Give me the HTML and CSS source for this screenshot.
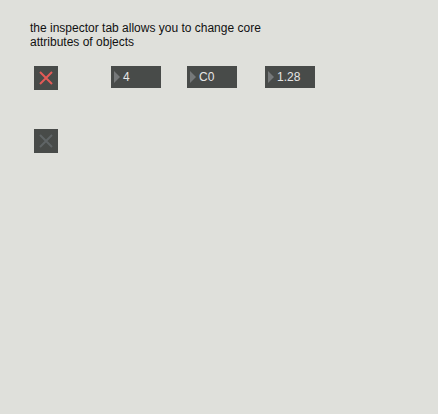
FILE: index.html
```html
<!DOCTYPE html>
<html>
<head>
<meta charset="utf-8">
<link rel="stylesheet" href="styles.css">
</head>
<body>
<div class="patch">
  <p class="comment">the inspector tab allows you to change core<br>attributes of objects</p>
  <div class="row">
    <div class="toggle on">
      <svg width="14" height="14" viewBox="0 0 14 14"><path d="M1 1 L13 13 M13 1 L1 13" stroke="#e35a57" stroke-width="2" stroke-linecap="butt"/></svg>
    </div>
    <div class="numbox first"><span class="tri"></span><span class="val">4</span></div>
    <div class="numbox second"><span class="tri"></span><span class="val">C0</span></div>
    <div class="numbox third"><span class="tri"></span><span class="val">1.28</span></div>
  </div>
  <div class="toggle off">
    <svg width="14" height="14" viewBox="0 0 14 14"><path d="M1 1 L13 13 M13 1 L1 13" stroke="#5f6466" stroke-width="2"/></svg>
  </div>
</div>
</body>
</html>
```
FILE: styles.css
```css
html, body {
  margin: 0;
  padding: 0;
  background: #dfe0db;
  width: 438px;
  height: 414px;
  overflow: hidden;
}
.patch {
  padding: 21px 0 0 30px;
  font-family: "Liberation Sans", Arial, sans-serif;
}
.comment {
  margin: 0;
  font-size: 12px;
  line-height: 14px;
  color: #111;
}
.row {
  display: flex;
  align-items: flex-start;
  margin-top: 17px;
  margin-left: 4px;
}
.toggle {
  width: 24px;
  height: 24px;
  background: #484b49;
  display: flex;
  align-items: center;
  justify-content: center;
}
.toggle.off {
  margin-top: 39px;
  margin-left: 4px;
}
.numbox {
  width: 50px;
  height: 22px;
  background: #484b49;
  display: flex;
  align-items: center;
  color: #e6e6e6;
  font-size: 12px;
}
.numbox.first {
  margin-left: 53px;
}
.numbox.second {
  margin-left: 26px;
}
.numbox.third {
  margin-left: 28px;
}
.tri {
  width: 0;
  height: 0;
  border-top: 6px solid transparent;
  border-bottom: 6px solid transparent;
  border-left: 6px solid #76797a;
  margin-left: 3px;
  margin-right: 3px;
}
.val {
  line-height: 14px;
}
```
